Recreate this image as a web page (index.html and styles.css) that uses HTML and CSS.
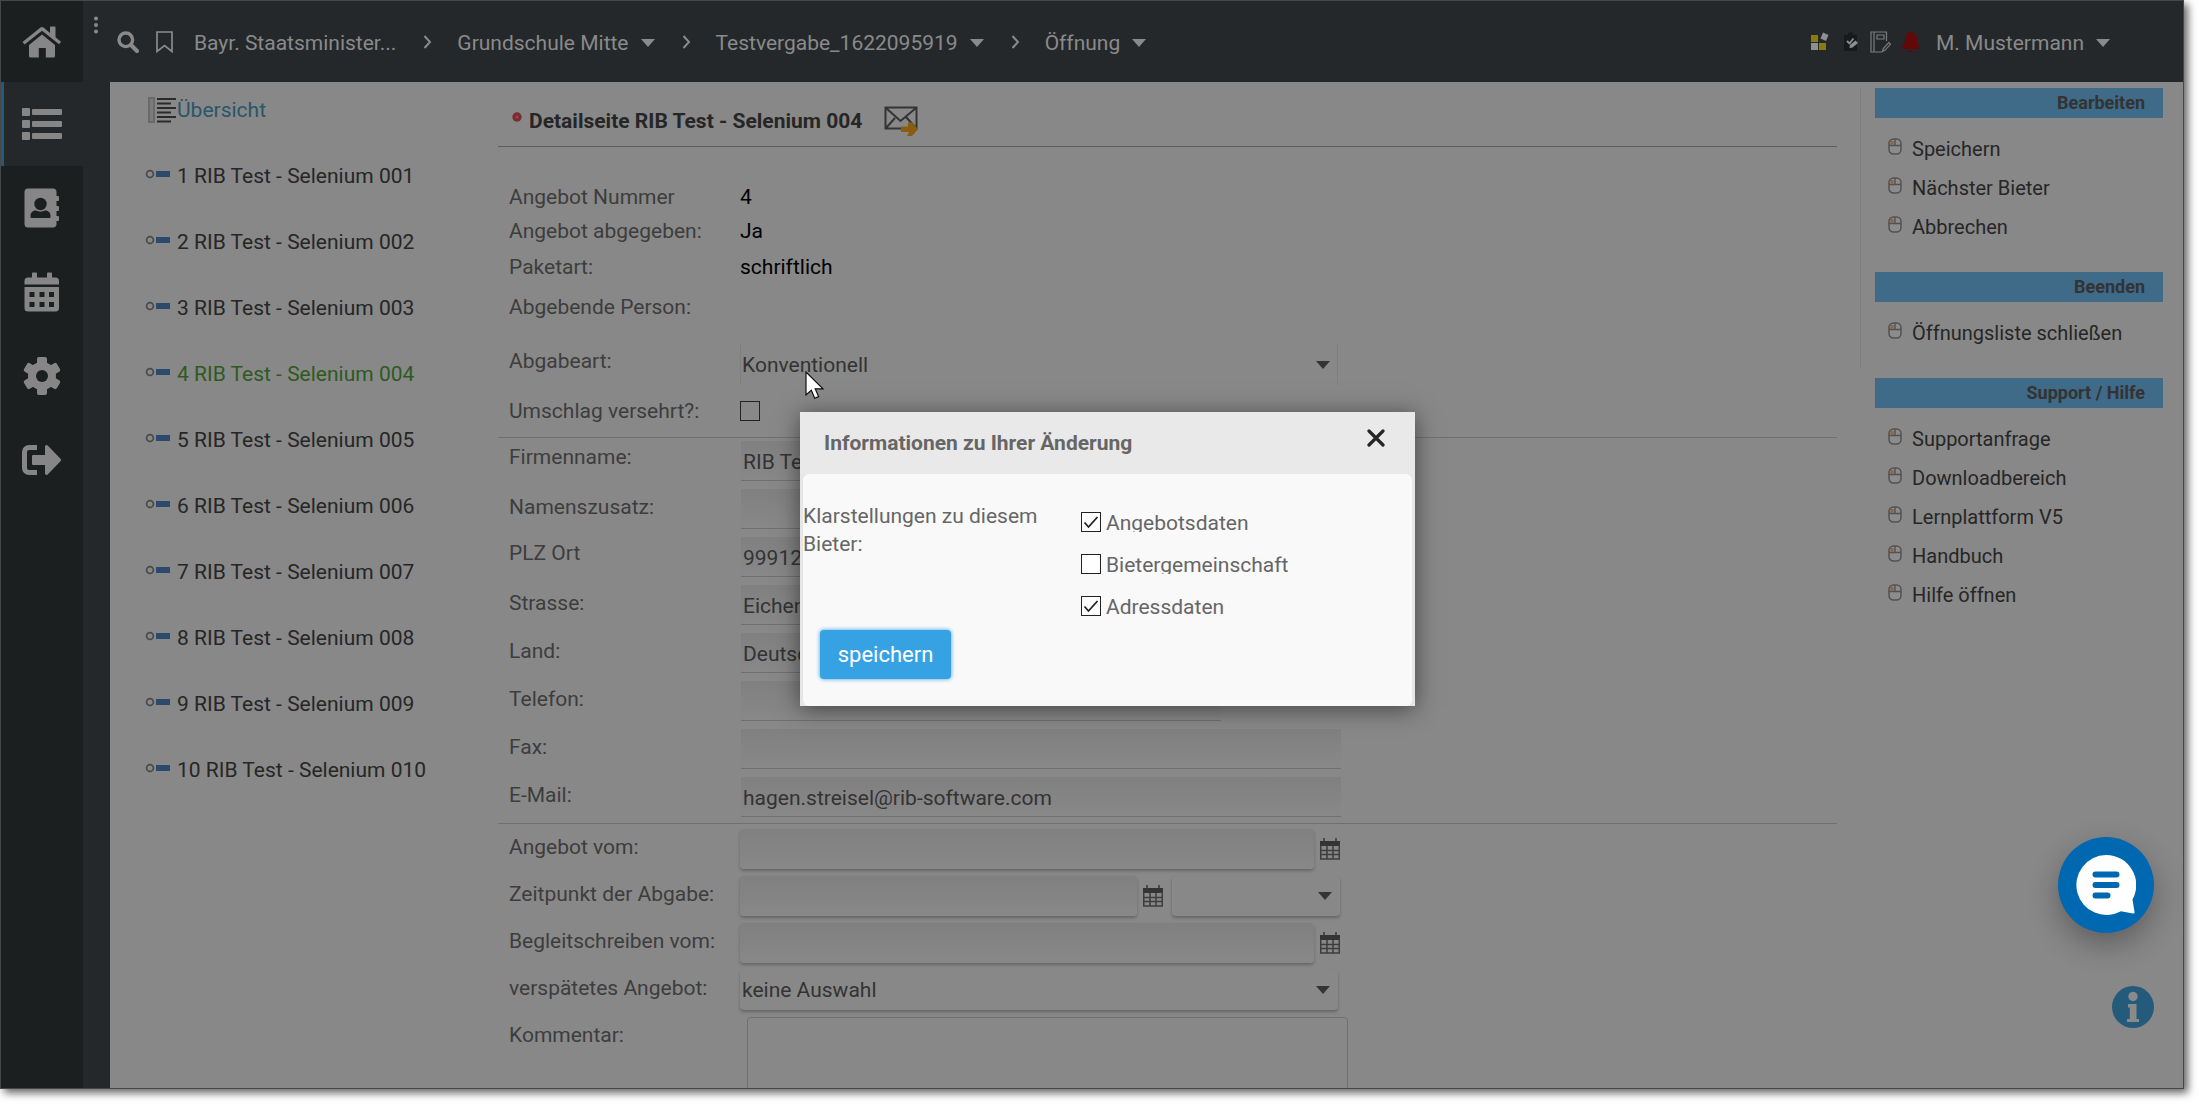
FILE: index.html
```html
<!DOCTYPE html>
<html lang="de">
<head>
<meta charset="utf-8">
<title>Detailseite RIB Test - Selenium 004</title>
<link rel="stylesheet" href="styles.css">
</head>
<body>
<svg class="sprite" aria-hidden="true">
  <symbol id="key" viewBox="0 0 26 10">
    <circle cx="5" cy="5" r="3.400" fill="none" stroke="#4a4a4a" stroke-width="1.700"/>
    <rect x="11" y="2" width="14" height="6" fill="#2c4a6b"/>
  </symbol>
  <symbol id="mouse" viewBox="0 0 14 17">
    <rect x="1" y="1" width="12" height="15" rx="4.500" fill="#8c8c8c" stroke="#525252" stroke-width="1.500"/>
    <path d="M2.500 3h3v3.500h-3z" fill="#96623a"/>
    <path d="M7 1v6.500M1 7.500h12" stroke="#525252" stroke-width="1.400"/>
  </symbol>
  <symbol id="cal" viewBox="0 0 20 22">
    <path d="M4 0v5M16 0v5" stroke="#3d3d3d" stroke-width="1.600"/>
    <path d="M0 3h20v5H0z" fill="#343434"/>
    <path d="M.75 7v14h18.500V7M1 12.500h18M1 16.500h18M7 8v13M13 8v13" fill="none" stroke="#3d3d3d" stroke-width="1.500"/>
  </symbol>
  <symbol id="chev" viewBox="0 0 9 14"><path d="M1.500 1l5.500 6-5.500 6" fill="none" stroke="#8a8a8a" stroke-width="2"/></symbol>
  <symbol id="caret" viewBox="0 0 14 8"><path d="M0 0h14L7 8z" fill="currentColor"/></symbol>
</svg>

<div class="window">
  <nav class="rail" aria-label="Hauptnavigation">
    <a class="rail-link" href="#" aria-label="Start"><svg width="40" height="32" viewBox="0 0 40 32" fill="currentColor"><path d="M20 8.500 33 19v11a1.500 1.500 0 0 1-1.500 1.500h-7.700V22h-7v9.500H8.500A1.500 1.500 0 0 1 7 30V19z"/><path d="M18.500 1.500a2.500 2.500 0 0 1 3 0L28 7V1.500A1 1 0 0 1 29 .5h3.500a1 1 0 0 1 1 1v9.800l5.500 4.500-1.900 2.500L20 4.800 2.500 18.500.5 15.900z"/></svg></a>
    <a class="rail-link rail-link-active" href="#" aria-label="Liste"><svg width="40" height="34" viewBox="0 0 40 34" fill="currentColor"><rect x="0" y="1" width="8" height="8" rx="1"/><rect x="0" y="13" width="8" height="8" rx="1"/><rect x="0" y="25" width="8" height="8" rx="1"/><rect x="10" y="2" width="30" height="6" rx="1"/><rect x="10" y="14" width="30" height="6" rx="1"/><rect x="10" y="26" width="30" height="6" rx="1"/></svg></a>
    <a class="rail-link" href="#" aria-label="Kontakte"><svg width="36" height="40" viewBox="0 0 36 40"><path fill="currentColor" d="M4 .5h25a3.500 3.500 0 0 1 3.500 3.500v4H34a1 1 0 0 1 1 1v3a1 1 0 0 1-1 1h-1.500v5H34a1 1 0 0 1 1 1v3a1 1 0 0 1-1 1h-1.500v5H34a1 1 0 0 1 1 1v3a1 1 0 0 1-1 1h-1.500v3.500A3.500 3.500 0 0 1 29 39.500H4A3.500 3.500 0 0 1 .5 36V4A3.500 3.500 0 0 1 4 .5z"/><circle cx="16.500" cy="16" r="6.200" fill="#1c1f20"/><path fill="#1c1f20" d="M6.500 29v-1.500c0-3 2.500-5 5.500-5 3 1.500 6 1.500 9 0 3 0 5.500 2 5.500 5V29a1 1 0 0 1-1 1h-18a1 1 0 0 1-1-1z"/></svg></a>
    <a class="rail-link" href="#" aria-label="Kalender"><svg width="36" height="40" viewBox="0 0 36 40"><path fill="currentColor" d="M8 1.500a1 1 0 0 1 1-1h3a1 1 0 0 1 1 1V5.500h10v-4a1 1 0 0 1 1-1h3a1 1 0 0 1 1 1v4h3.500A3.500 3.500 0 0 1 35 9v3.500H.5V9A3.500 3.500 0 0 1 4 5.500h4zM.5 15H35v21a3.500 3.500 0 0 1-3.500 3.500H4A3.500 3.500 0 0 1 .5 36z"/><path fill="#1c1f20" d="M5.500 20h5v5h-5zM15.500 20h5v5h-5zM25 20h5v5h-5zM5.500 30h5v5h-5zM15.500 30h5v5h-5zM25 30h5v5h-5z"/></svg></a>
    <a class="rail-link" href="#" aria-label="Einstellungen"><svg width="38" height="40" viewBox="0 0 38 40"><g fill="currentColor"><circle cx="19" cy="20" r="14"/><rect x="14" y="1" width="10" height="38" rx="2"/><rect x="14" y="1" width="10" height="38" rx="2" transform="rotate(60 19 20)"/><rect x="14" y="1" width="10" height="38" rx="2" transform="rotate(120 19 20)"/></g><circle cx="19" cy="20" r="6" fill="#1c1f20"/></svg></a>
    <a class="rail-link" href="#" aria-label="Abmelden"><svg width="40" height="32" viewBox="0 0 40 32"><path d="M15 3.500H7A4.500 4.500 0 0 0 2.500 8v16A4.500 4.500 0 0 0 7 28.500h8" fill="none" stroke="currentColor" stroke-width="5"/><path fill="currentColor" d="M11 11h12V3c0-1.800 1.500-2.500 2.700-1.400l12.800 13.200a1.700 1.700 0 0 1 0 2.400L25.700 30.400C24.500 31.500 23 30.800 23 29v-8H11a1 1 0 0 1-1-1v-8a1 1 0 0 1 1-1z"/></svg></a>
  </nav>

  <div class="shell">
    <header class="topbar">
      <svg class="dots" width="6" height="18" viewBox="0 0 6 18" fill="#8a8a8a"><circle cx="3" cy="2.500" r="2"/><circle cx="3" cy="9" r="2"/><circle cx="3" cy="15.500" r="2"/></svg>
      <svg class="search" width="22" height="22" viewBox="0 0 22 22" fill="none" stroke="#8a8a8a"><circle cx="8.800" cy="8.800" r="6.800" stroke-width="3.400"/><path d="M14 14l6 6" stroke-width="4" stroke-linecap="round"/></svg>
      <svg class="bookmark" width="17" height="22" viewBox="0 0 17 22"><path d="M1 1h15v19.500l-7.500-6-7.500 6z" fill="none" stroke="#8a8a8a" stroke-width="1.700"/></svg>
      <ol class="crumbs">
        <li><a href="#">Bayr. Staatsminister...</a></li>
        <li><svg class="chev" width="9" height="14"><use href="#chev"/></svg><a href="#">Grundschule Mitte <svg class="caret" width="14" height="8"><use href="#caret"/></svg></a></li>
        <li><svg class="chev" width="9" height="14"><use href="#chev"/></svg><a href="#">Testvergabe_1622095919 <svg class="caret" width="14" height="8"><use href="#caret"/></svg></a></li>
        <li><svg class="chev" width="9" height="14"><use href="#chev"/></svg><a href="#">Öffnung <svg class="caret" width="14" height="8"><use href="#caret"/></svg></a></li>
      </ol>
      <div class="tools">
        <svg class="apps" width="18" height="20" viewBox="0 0 18 20"><path fill="#8a7a12" d="M0 3h7v7H0zM8 11h7v7H8z"/><path fill="#8f8f8f" d="M0 11h7v7H0zM12 .5l5.500 2.500-2.500 6-5.500-2.500z"/></svg>
        <svg width="16" height="20" viewBox="0 0 16 20"><path fill="#171a1b" d="M1 3h3.500l1-2.500h4L10.500 3H14v16H1z"/><path fill="none" stroke="#8f8f8f" stroke-width="1.800" d="M4 9l2.500 2.500L10.500 6.500"/><path fill="#8f8f8f" d="M7 13l5.500-4.500 2.500 2.500-5.500 4.500-3 .5z"/></svg>
        <svg width="21" height="22" viewBox="0 0 21 22" fill="none" stroke="#7c7c7c" stroke-width="1.200"><path d="M16.500 10V1H1v20h11M4 1v20"/><path d="M7 4h7v4H7z"/><path d="M12.500 20.500l.8-3 5.500-6 1.800 1.600-5.500 6z"/></svg>
        <svg width="18" height="21" viewBox="0 0 18 21" fill="#620809"><path d="M7.500 1.500a1.500 1.500 0 0 1 3 0c3 .8 4.500 3.200 4.500 6.500 0 4.500 1 6 3 8v2H0v-2c2-2 3-3.500 3-8 0-3.300 1.500-5.700 4.500-6.500zM6.500 19h5a2.500 2 0 0 1-5 0z"/></svg>
      </div>
      <a class="user" href="#">M. Mustermann <svg class="caret" width="14" height="8"><use href="#caret"/></svg></a>
    </header>

    <div class="page">
      <nav class="bidders" aria-label="Bieter">
        <a class="bidder overview" href="#"><svg width="29" height="27" viewBox="0 0 29 27"><rect x="1" y="1" width="5" height="24" fill="#7c7c7c" stroke="#6a6a6a" stroke-width="2"/><path d="M9 2h19M9 6.500h14M9 11h19M9 15.500h14M9 20h19M9 24.500h14" stroke="#2b2b2b" stroke-width="2.200"/></svg>Übersicht</a>
        <a class="bidder" href="#"><svg class="key" width="26" height="10"><use href="#key"/></svg>1 RIB Test - Selenium 001</a>
        <a class="bidder" href="#"><svg class="key" width="26" height="10"><use href="#key"/></svg>2 RIB Test - Selenium 002</a>
        <a class="bidder" href="#"><svg class="key" width="26" height="10"><use href="#key"/></svg>3 RIB Test - Selenium 003</a>
        <a class="bidder bidder-current" href="#"><svg class="key" width="26" height="10"><use href="#key"/></svg>4 RIB Test - Selenium 004</a>
        <a class="bidder" href="#"><svg class="key" width="26" height="10"><use href="#key"/></svg>5 RIB Test - Selenium 005</a>
        <a class="bidder" href="#"><svg class="key" width="26" height="10"><use href="#key"/></svg>6 RIB Test - Selenium 006</a>
        <a class="bidder" href="#"><svg class="key" width="26" height="10"><use href="#key"/></svg>7 RIB Test - Selenium 007</a>
        <a class="bidder" href="#"><svg class="key" width="26" height="10"><use href="#key"/></svg>8 RIB Test - Selenium 008</a>
        <a class="bidder" href="#"><svg class="key" width="26" height="10"><use href="#key"/></svg>9 RIB Test - Selenium 009</a>
        <a class="bidder" href="#"><svg class="key" width="26" height="10"><use href="#key"/></svg>10 RIB Test - Selenium 010</a>
      </nav>

      <main class="detail">
        <div class="heading">
          <svg class="marker" width="10" height="10" viewBox="0 0 10 10"><circle cx="5" cy="5" r="4.700" fill="#7c2c2e"/><circle cx="5" cy="5" r="1.500" fill="#8f4a4c"/></svg>
          <h1>Detailseite RIB Test - Selenium 004</h1>
          <svg width="34" height="30" viewBox="0 0 34 30"><path d="M1.500 1.500h31v21h-31zM2 2l14.500 13L32 2M2 22l9-10M31 21l-9-10" fill="none" stroke="#343434" stroke-width="2"/><path d="M17 20.500h7v-4h4l6 6.800-6 6.700h-5l2-4h-8z" fill="#8a5c10"/></svg>
        </div>

        <section class="facts">
          <div class="row row-s"><span class="label">Angebot Nummer</span><span class="value">4</span></div>
          <div class="row row-s"><span class="label">Angebot abgegeben:</span><span class="value">Ja</span></div>
          <div class="row row-m"><span class="label">Paketart:</span><span class="value">schriftlich</span></div>
          <div class="row row-l"><span class="label">Abgebende Person:</span></div>
          <div class="row row-kind"><label class="label label-high" for="kind">Abgabeart:</label><span class="pick pick-flat"><select id="kind"><option>Konventionell</option></select><svg class="caret" width="14" height="8"><use href="#caret"/></svg></span></div>
          <div class="row row-xl"><label class="label" for="damaged">Umschlag versehrt?:</label><input class="tick" id="damaged" type="checkbox"></div>
        </section>

        <section class="block">
          <div class="row"><label class="label label-high" for="firm">Firmenname:</label><input class="line" id="firm" type="text" value="RIB Test - Selenium 004"></div>
          <div class="row"><label class="label" for="suffix">Namenszusatz:</label><input class="line" id="suffix" type="text"></div>
          <div class="row"><label class="label label-high" for="zip">PLZ Ort</label><input class="line" id="zip" type="text" value="99912"></div>
          <div class="row"><label class="label" for="street">Strasse:</label><input class="line" id="street" type="text" value="Eichenweg"></div>
          <div class="row"><label class="label" for="land">Land:</label><input class="line" id="land" type="text" value="Deutschland"></div>
          <div class="row"><label class="label" for="phone">Telefon:</label><input class="line line-short" id="phone" type="tel"></div>
          <div class="row"><label class="label" for="fax">Fax:</label><input class="line" id="fax" type="tel"></div>
          <div class="row"><label class="label" for="mail">E-Mail:</label><input class="line" id="mail" type="email" value="hagen.streisel@rib-software.com"></div>
        </section>

        <section class="block block-dates">
          <div class="row"><label class="label" for="from">Angebot vom:</label><div class="fields"><input class="box" id="from" type="text"><button class="cal" type="button" aria-label="Datum wählen"><svg width="20" height="22"><use href="#cal"/></svg></button></div></div>
          <div class="row"><label class="label" for="when">Zeitpunkt der Abgabe:</label><div class="fields"><input class="box" id="when" type="text"><button class="cal" type="button" aria-label="Datum wählen"><svg width="20" height="22"><use href="#cal"/></svg></button><span class="pick pick-time"><select aria-label="Uhrzeit"><option></option></select><svg class="caret" width="14" height="8"><use href="#caret"/></svg></span></div></div>
          <div class="row"><label class="label" for="letter">Begleitschreiben vom:</label><div class="fields"><input class="box" id="letter" type="text"><button class="cal" type="button" aria-label="Datum wählen"><svg width="20" height="22"><use href="#cal"/></svg></button></div></div>
          <div class="row"><label class="label" for="late">verspätetes Angebot:</label><span class="pick"><select id="late"><option>keine Auswahl</option></select><svg class="caret" width="14" height="8"><use href="#caret"/></svg></span></div>
          <div class="row row-note"><label class="label" for="note">Kommentar:</label><textarea class="note" id="note" rows="4"></textarea></div>
        </section>
      </main>

      <aside class="actions">
        <section class="group">
          <h2>Bearbeiten</h2>
          <a href="#"><svg width="14" height="17"><use href="#mouse"/></svg>Speichern</a>
          <a href="#"><svg width="14" height="17"><use href="#mouse"/></svg>Nächster Bieter</a>
          <a href="#"><svg width="14" height="17"><use href="#mouse"/></svg>Abbrechen</a>
        </section>
        <section class="group">
          <h2>Beenden</h2>
          <a href="#"><svg width="14" height="17"><use href="#mouse"/></svg>Öffnungsliste schließen</a>
        </section>
        <section class="group">
          <h2>Support / Hilfe</h2>
          <a href="#"><svg width="14" height="17"><use href="#mouse"/></svg>Supportanfrage</a>
          <a href="#"><svg width="14" height="17"><use href="#mouse"/></svg>Downloadbereich</a>
          <a href="#"><svg width="14" height="17"><use href="#mouse"/></svg>Lernplattform V5</a>
          <a href="#"><svg width="14" height="17"><use href="#mouse"/></svg>Handbuch</a>
          <a href="#"><svg width="14" height="17"><use href="#mouse"/></svg>Hilfe öffnen</a>
        </section>
      </aside>
    </div>
  </div>

  <button class="chat" type="button" aria-label="Chat öffnen"><svg width="60" height="60" viewBox="0 0 60 60"><path d="M30 0a30 30 0 0 1 26.500 44.500L58.500 57a1.300 1.300 0 0 1-1.500 1.500L45 56.200A30 30 0 1 1 30 0z" fill="#fff"/><path d="M19.500 19.500h21M19.500 30h21M19.500 40.500h12" stroke="#0067b1" stroke-width="6" stroke-linecap="round"/></svg></button>
  <button class="info" type="button" aria-label="Information"><svg width="42" height="42" viewBox="0 0 42 42"><circle cx="21" cy="21" r="21" fill="#245a7a"/><circle cx="21" cy="10.500" r="4.700" fill="#8a8a8a"/><path d="M16 18h8.500v15H27v3H15v-3h2.800V21.500H16z" fill="#8a8a8a"/></svg></button>

  <svg class="pointer" width="19" height="28" viewBox="0 0 19 28"><path d="M1 1v23l5.300-4.800 3.400 8 3.900-1.600-3.400-7.800H18z" fill="#fff" stroke="#111" stroke-width="1.200"/></svg>

  <div class="dialog" role="dialog" aria-labelledby="dialog-title">
    <div class="dialog-head">
      <h2 id="dialog-title">Informationen zu Ihrer Änderung</h2>
      <button class="close" type="button" aria-label="Schließen"><svg width="18" height="18" viewBox="0 0 18 18"><path d="M2 2l14 14M16 2L2 16" stroke="#262626" stroke-width="3.200" stroke-linecap="round"/></svg></button>
    </div>
    <form class="dialog-body">
      <p class="question">Klarstellungen zu diesem Bieter:</p>
      <div class="choices">
        <label class="choice"><input class="tick" type="checkbox" checked><span>Angebotsdaten</span></label>
        <label class="choice"><input class="tick" type="checkbox"><span>Bietergemeinschaft</span></label>
        <label class="choice"><input class="tick" type="checkbox" checked><span>Adressdaten</span></label>
      </div>
      <button class="save" type="button">speichern</button>
    </form>
  </div>
</div>
</body>
</html>
```
FILE: styles.css
```css
* { box-sizing: border-box; }

body {
  margin: 0;
  padding: 0 15px 15px 0;
  height: 100vh;
  overflow: hidden;
  background: #fff;
  color: #262626;
  font: 21px/24px Roboto, "Liberation Sans", sans-serif;
}

a { color: inherit; text-decoration: none; }
button, input, select, textarea { font: inherit; color: inherit; margin: 0; }
h1, h2, p, ol { margin: 0; padding: 0; }
svg { display: block; flex: none; }
.sprite { position: absolute; width: 0; height: 0; }

.window {
  position: relative;
  display: flex;
  height: 100%;
  overflow: hidden;
  border: 1px solid #474747;
  background: #24282b;
  box-shadow: 4px 4px 8px rgba(0, 0, 0, .6);
}

/* icon rail */
.rail { flex: none; width: 82px; background: #1c1f20; color: #868686; }
.rail-link { display: flex; align-items: center; justify-content: center; height: 84px; }
.rail-link:first-child { height: 81px; }
.rail-link-active { background: #24282b; box-shadow: inset 3px 0 #235a7c; }

.shell { flex: 1; min-width: 0; display: flex; flex-direction: column; }

/* top bar */
.topbar { display: flex; align-items: center; height: 81px; color: #8a8a8a; flex: none; white-space: nowrap; }
.dots { margin: 0 18px 34px 10px; }
.search { margin-right: 17px; }
.bookmark { margin-right: 21px; }
.crumbs { display: flex; list-style: none; }
.crumbs li { display: flex; align-items: center; }
.crumbs a, .user { display: flex; align-items: center; gap: 12px; padding-top: 3px; }
.chev { margin: 0 25px 0 27px; }
.tools { display: flex; align-items: center; gap: 11px; margin-left: auto; }
.apps { margin-right: 3px; }
.user { margin: 0 73px 0 16px; }

/* page */
.page {
  flex: 1;
  min-height: 0;
  display: grid;
  grid-template-columns: 388px minmax(0, 1fr) 346px;
  margin-left: 27px;
  overflow: hidden;
  background: #888;
}

.bidders { padding-left: 35px; display: flex; flex-direction: column; align-self: start; }
.bidder { display: flex; align-items: center; height: 66px; gap: 6px; }
.overview { height: 56px; padding-left: 3px; gap: 0; color: #28566a; margin-bottom: 5px; }
.bidder-current { color: #2e5a22; }
.key { margin-bottom: 4px; }

/* detail form */
.heading { display: flex; align-items: center; height: 65px; padding: 14px 0 0 14px; border-bottom: 1px solid #5d5d5d; margin-bottom: 33px; }
.heading h1 { font-size: 21px; line-height: 24px; font-weight: 700; margin: 0 22px 0 7px; }
.marker { margin-bottom: 8px; }

.row { display: grid; grid-template-columns: 242px 600px; height: 40px; align-items: center; }
.label { padding-left: 11px; color: #3d3d3d; }
.block .label { padding-bottom: 4px; }
.label-high { align-self: start; margin-top: 4px; }
.value { color: #000; }
.row-s { height: 34px; }
.row-m { height: 38px; }
.row-l { height: 42px; }
.row-xl { height: 52px; }
.row-kind { margin-top: 17px; }

.block { display: flex; flex-direction: column; gap: 8px; padding: 3px 0 6px; border-top: 1px solid #707070; }
.block-dates { gap: 7px; padding-top: 5px; }

.line, .box, .pick select { width: 100%; height: 40px; border: 0; color: #333; outline: 0; }
.line { margin-left: 1px; padding: 2px 2px 0; width: 600px; border-bottom: 1px solid #707070; background: linear-gradient(#808080, #888); }
.line-short { width: 480px; }
.box { flex: 1; min-width: 0; border-radius: 4px; padding: 0 3px; background: linear-gradient(#808080, #888); box-shadow: 0 2px 3px rgba(0, 0, 0, .25); }
.fields { display: flex; align-items: center; gap: 6px; }
.cal { padding: 0; border: 0; background: none; }

.pick { position: relative; width: 598px; }
.pick select { appearance: none; padding: 0 2px; border-radius: 4px; background: #888; box-shadow: 0 2px 3px rgba(0, 0, 0, .25); }
.pick-flat select { border: 1px solid #7e7e7e; border-width: 0 1px; box-shadow: none; padding: 0 1px; border-radius: 0; }
.pick .caret { position: absolute; right: 8px; top: 16px; color: #343434; pointer-events: none; }
.pick-time { width: 168px; margin-left: 3px; }
.row-note { height: auto; align-items: start; }
.row-note .label { padding-top: 6px; }
.note { margin-left: 7px; width: 601px; height: 110px; border: 1px solid #707070; border-radius: 4px; background: #888; resize: none; }

.tick { appearance: none; width: 20px; height: 20px; border: 1px solid #222; flex: none; }
.tick:checked {
  background: url("data:image/svg+xml,%3Csvg xmlns='http://www.w3.org/2000/svg' viewBox='0 0 18 18'%3E%3Cpath d='M2.500 9.500l4 4.500 9-10' fill='none' stroke='%23222' stroke-width='1.800'/%3E%3C/svg%3E") center / 18px no-repeat;
}

/* action column */
.actions { padding: 6px 20px 0 38px; background: linear-gradient(#7e7e7e, #7e7e7e) 23px 6px / 1px 280px no-repeat; }
.group { margin-bottom: 26px; font-size: 20px; }
.group h2 { height: 30px; margin-bottom: 11px; padding-right: 18px; background: #3f6a88; color: #333; font-size: 18px; line-height: 30px; text-align: right; }
.group a { display: flex; align-items: center; gap: 10px; height: 39px; padding-left: 13px; }
.group svg { margin-bottom: 5px; }

/* floating buttons */
.chat, .info { position: absolute; right: 29px; padding: 0; border: 0; border-radius: 50%; }
.chat { bottom: 155px; width: 96px; height: 96px; display: flex; align-items: center; justify-content: center; background: #0067b1; box-shadow: 0 12px 30px rgba(0, 0, 0, .3); }
.info { bottom: 60px; background: none; }

.pointer { position: absolute; left: 804px; top: 370px; }

/* dialog */
.dialog { position: absolute; left: 799px; top: 411px; width: 615px; background: #e6e6e6; color: #666; box-shadow: 0 3px 22px rgba(0, 0, 0, .5); }
.dialog-head { display: flex; justify-content: space-between; align-items: center; height: 62px; padding: 0 30px 0 24px; background: #e9e9e9; }
.dialog-head h2 { font-size: 21px; line-height: 24px; }
.close { padding: 0; border: 0; background: none; margin-bottom: 10px; }
.dialog-body { display: grid; grid-template-columns: 278px 1fr; margin: 0 3px; padding: 28px 0 27px; background: #f9f9f9; border-radius: 6px; }
.question { max-width: 250px; line-height: 28px; }
.choices { display: flex; flex-direction: column; gap: 22px; padding-top: 10px; }
.choice { display: flex; gap: 5px; height: 20px; }
.choice .tick { background-color: #fff; }
.choice span { overflow: hidden; height: 20px; line-height: 22px; }
.save { grid-column: 1; justify-self: start; margin: 14px 0 0 17px; width: 131px; height: 49px; padding: 0; border: 0; border-radius: 4px; background: #36a2e4; color: #fff; font-size: 22px; box-shadow: 0 0 4px #36a2e4; }
```
